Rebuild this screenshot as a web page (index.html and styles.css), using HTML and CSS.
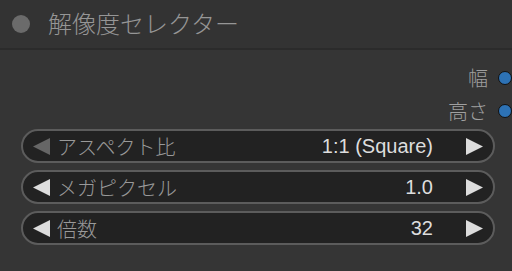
FILE: index.html
```html
<!DOCTYPE html>
<html lang="ja">
<head>
    <meta charset="UTF-8">
    <meta name="viewport" content="width=device-width, initial-scale=1.0">
    <link rel="stylesheet" href="styles.css">
    <title>解像度セレクター</title>
</head>
<body>
    <div class="node">
        <div class="node-title">
            <span class="title-dot"></span>
            <span class="title-text">解像度セレクター</span>
        </div>
        <div class="outputs">
            <div class="output-row">幅<span class="socket"></span></div>
            <div class="output-row">高さ<span class="socket"></span></div>
        </div>
        <div class="widgets">
            <div class="widget">
                <svg class="arrow dim" viewBox="0 0 17 17"><polygon points="17,0 17,17 0,8.5"/></svg>
                <span class="label">アスペクト比</span>
                <span class="value">1:1 (Square)</span>
                <svg class="arrow" viewBox="0 0 17 17"><polygon points="0,0 0,17 17,8.5"/></svg>
            </div>
            <div class="widget">
                <svg class="arrow" viewBox="0 0 17 17"><polygon points="17,0 17,17 0,8.5"/></svg>
                <span class="label">メガピクセル</span>
                <span class="value">1.0</span>
                <svg class="arrow" viewBox="0 0 17 17"><polygon points="0,0 0,17 17,8.5"/></svg>
            </div>
            <div class="widget">
                <svg class="arrow" viewBox="0 0 17 17"><polygon points="17,0 17,17 0,8.5"/></svg>
                <span class="label">倍数</span>
                <span class="value">32</span>
                <svg class="arrow" viewBox="0 0 17 17"><polygon points="0,0 0,17 17,8.5"/></svg>
            </div>
        </div>
    </div>
</body>
</html>
```

FILE: styles.css
```css
body {
    margin: 0;
    padding: 0;
    background-color: #353535;
    font-family: "Liberation Sans", "Noto Sans CJK JP", sans-serif;
    overflow: hidden;
}

.node {
    width: 512px;
    height: 271px;
    background-color: #353535;
}

/* Title bar */
.node-title {
    height: 50px;
    display: flex;
    align-items: center;
    background-color: #333333;
    border-bottom: 2px solid #2b2b2b;
    box-sizing: border-box;
}

.title-dot {
    width: 18px;
    height: 18px;
    border-radius: 50%;
    background-color: #6b6b6b;
    margin-left: 12px;
    margin-right: 18px;
}

.title-text {
    color: #969696;
    font-size: 24px;
    font-weight: 300;
    margin-top: -3px;
}

/* Output slots */
.outputs {
    padding-top: 11px;
    display: flex;
    flex-direction: column;
    align-items: flex-end;
}

.output-row {
    height: 33px;
    display: flex;
    align-items: center;
    color: #a0a0a0;
    font-size: 20px;
    font-weight: 300;
}

.socket {
    width: 12px;
    height: 12px;
    border-radius: 50%;
    background-color: #2d72b5;
    border: 1px solid #111;
    margin-left: 10px;
    margin-right: 0;
}

/* Combo / number widgets */
.widgets {
    margin-top: 2px;
    padding-left: 21px;
    padding-right: 17px;
    display: flex;
    flex-direction: column;
    gap: 7px;
}

.widget {
    height: 34px;
    box-sizing: border-box;
    border: 2px solid #5c5c5c;
    border-radius: 17px;
    background-color: #222222;
    display: flex;
    align-items: center;
    padding: 0 10px 0 10px;
    font-size: 20px;
}

.arrow {
    width: 17px;
    height: 17px;
    fill: #dddddd;
    flex: none;
}

.arrow.dim {
    fill: #666666;
}

.label {
    color: #999999;
    font-weight: 300;
    margin-left: 7px;
    flex: 1;
}

.value {
    color: #dddddd;
    margin-right: 33px;
}
```
